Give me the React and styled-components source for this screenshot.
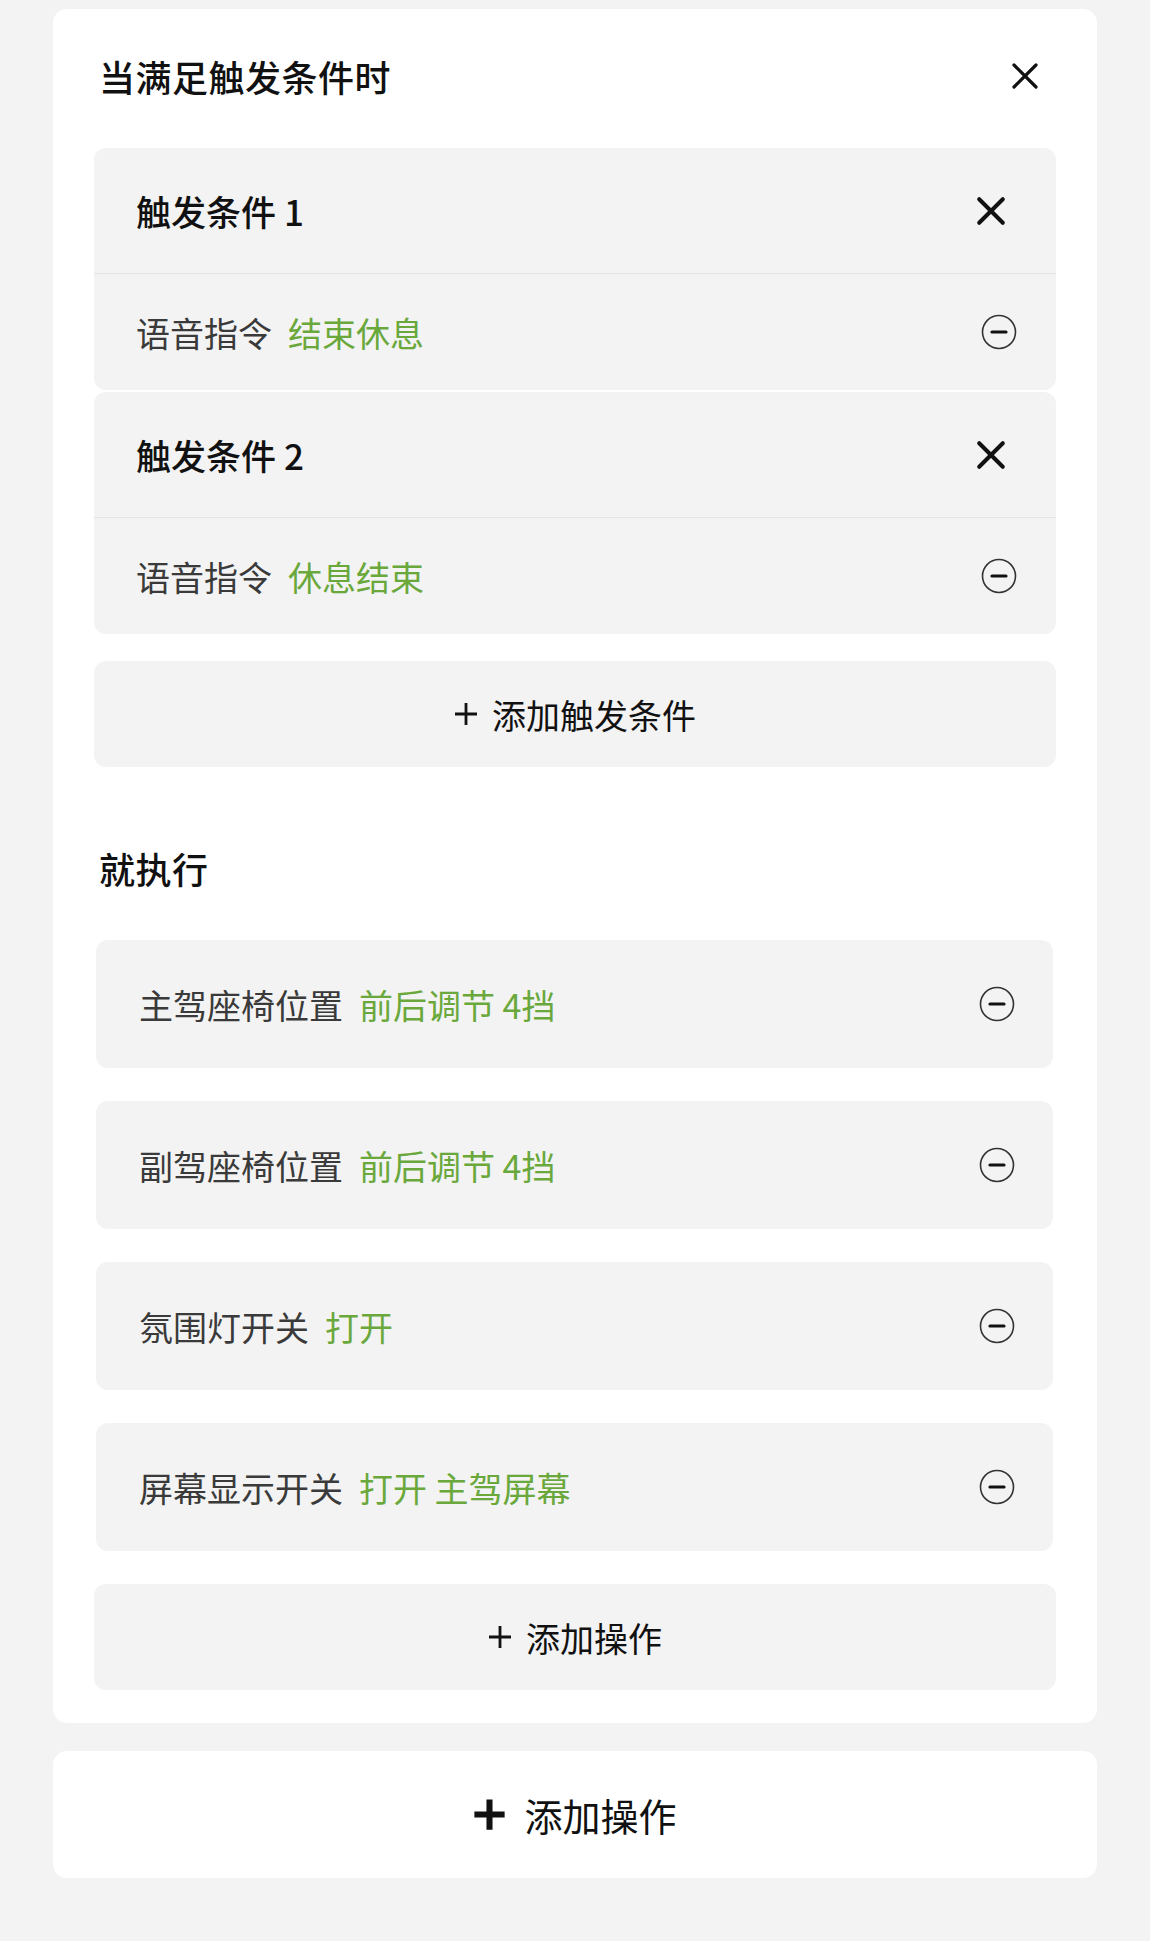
import React from "react";
import styled, { createGlobalStyle } from "styled-components";

const GlobalStyle = createGlobalStyle`
  body {
    margin: 0;
    background: #f3f3f3;
    font-family: "Noto Sans CJK SC", "Noto Sans", sans-serif;
    color: #111;
  }
`;

const triggers = [
  { title: "触发条件 1", label: "语音指令", value: "结束休息" },
  { title: "触发条件 2", label: "语音指令", value: "休息结束" },
];

const actions = [
  { label: "主驾座椅位置", value: "前后调节 4挡" },
  { label: "副驾座椅位置", value: "前后调节 4挡" },
  { label: "氛围灯开关", value: "打开" },
  { label: "屏幕显示开关", value: "打开 主驾屏幕" },
];

const CloseIcon = ({ size = 28, stroke = 3 }) => (
  <svg width={size} height={size} viewBox="0 0 28 28" fill="none">
    <path
      d="M3 3 L25 25 M25 3 L3 25"
      stroke="#111"
      strokeWidth={stroke}
      strokeLinecap="round"
    />
  </svg>
);

const MinusCircle = () => (
  <svg width="36" height="36" viewBox="0 0 36 36" fill="none">
    <circle cx="18" cy="18" r="16.5" stroke="#333" strokeWidth="1.6" />
    <path d="M11 18 H25" stroke="#111" strokeWidth="3.2" strokeLinecap="round" />
  </svg>
);

const PlusIcon = ({ size = 24, stroke = 2.6 }) => (
  <svg width={size} height={size} viewBox="0 0 24 24" fill="none">
    <path d="M12 1 V23 M1 12 H23" stroke="#111" strokeWidth={stroke} />
  </svg>
);

export default function App() {
  return (
    <>
      <GlobalStyle />
      <Page>
        <Card>
          <SectionHeader $lift={6}>
            <SectionTitle>当满足触发条件时</SectionTitle>
            <IconButton $right={17}>
              <CloseIcon size={28} stroke={3.2} />
            </IconButton>
          </SectionHeader>

          <TriggerList>
            {triggers.map((t) => (
              <TriggerBlock key={t.title}>
                <TriggerHeader>
                  <BlockTitle>{t.title}</BlockTitle>
                  <IconButton $right={6}>
                    <CloseIcon size={30} stroke={3.8} />
                  </IconButton>
                </TriggerHeader>
                <TriggerBody>
                  <RowText>
                    <Label>{t.label}</Label>
                    <Value>{t.value}</Value>
                  </RowText>
                  <IconButton>
                    <MinusCircle />
                  </IconButton>
                </TriggerBody>
              </TriggerBlock>
            ))}
          </TriggerList>

          <AddButton>
            <PlusIcon size={24} stroke={2.8} />
            <span>添加触发条件</span>
          </AddButton>

          <SectionHeader $spaced $lift={6}>
            <SectionTitle>就执行</SectionTitle>
          </SectionHeader>

          <ActionList>
            {actions.map((a) => (
              <ActionRow key={a.label}>
                <RowText>
                  <Label>{a.label}</Label>
                  <Value>{a.value}</Value>
                </RowText>
                <IconButton>
                  <MinusCircle />
                </IconButton>
              </ActionRow>
            ))}
          </ActionList>

          <AddButton>
            <PlusIcon size={24} stroke={2.8} />
            <span>添加操作</span>
          </AddButton>
        </Card>

        <BottomCard>
          <PlusIcon size={33} stroke={4.4} />
          <span>添加操作</span>
        </BottomCard>
      </Page>
    </>
  );
}

const Page = styled.div`
  padding: 9px 53px 62px;
  display: flex;
  flex-direction: column;
  gap: 28px;
`;

const Card = styled.div`
  background: #fff;
  border-radius: 14px;
  padding: 0 41px 33px;
  display: flex;
  flex-direction: column;
`;

const SectionHeader = styled.div`
  height: 139px;
  box-sizing: border-box;
  margin-top: ${(p) => (p.$spaced ? "34px" : "0")};
  padding: 0 0 ${(p) => (p.$lift ? `${p.$lift}px` : "0")} 5px;
  display: flex;
  align-items: center;
  justify-content: space-between;
`;

const SectionTitle = styled.h2`
  margin: 0;
  font-size: 36px;
  font-weight: 500;
  color: #111;
  letter-spacing: 0.5px;
`;

const IconButton = styled.div`
  display: flex;
  align-items: center;
  justify-content: center;
  margin-right: ${(p) => (p.$right ? `${p.$right}px` : "0")};
`;

const TriggerList = styled.div`
  display: flex;
  flex-direction: column;
  gap: 2px;
`;

const TriggerBlock = styled.div`
  background: #f3f3f3;
  border-radius: 12px;
  overflow: hidden;
`;

const TriggerHeader = styled.div`
  height: 125px;
  padding: 0 44px 0 42px;
  display: flex;
  align-items: center;
  justify-content: space-between;
  border-bottom: 1.5px solid #e4e4e4;
`;

const BlockTitle = styled.div`
  font-size: 35px;
  font-weight: 500;
  color: #111;
`;

const TriggerBody = styled.div`
  height: 116px;
  padding: 0 39px 0 42px;
  display: flex;
  align-items: center;
  justify-content: space-between;
`;

const RowText = styled.div`
  display: flex;
  align-items: center;
  gap: 16px;
  font-size: 34px;
`;

const Label = styled.span`
  color: #3a3a3a;
`;

const Value = styled.span`
  color: #6aa83c;
`;

const AddButton = styled.div`
  margin-top: 27px;
  height: 106px;
  background: #f3f3f3;
  border-radius: 12px;
  display: flex;
  align-items: center;
  justify-content: center;
  gap: 14px;
  font-size: 34px;
  color: #111;
`;

const ActionList = styled.div`
  display: flex;
  flex-direction: column;
  gap: 33px;
  margin: 0 3px 6px 2px;
`;

const ActionRow = styled.div`
  height: 128px;
  padding: 0 38px 0 43px;
  background: #f3f3f3;
  border-radius: 12px;
  display: flex;
  align-items: center;
  justify-content: space-between;
`;

const BottomCard = styled.div`
  height: 127px;
  background: #fff;
  border-radius: 14px;
  display: flex;
  align-items: center;
  justify-content: center;
  gap: 18px;
  font-size: 38px;
  color: #111;
`;
